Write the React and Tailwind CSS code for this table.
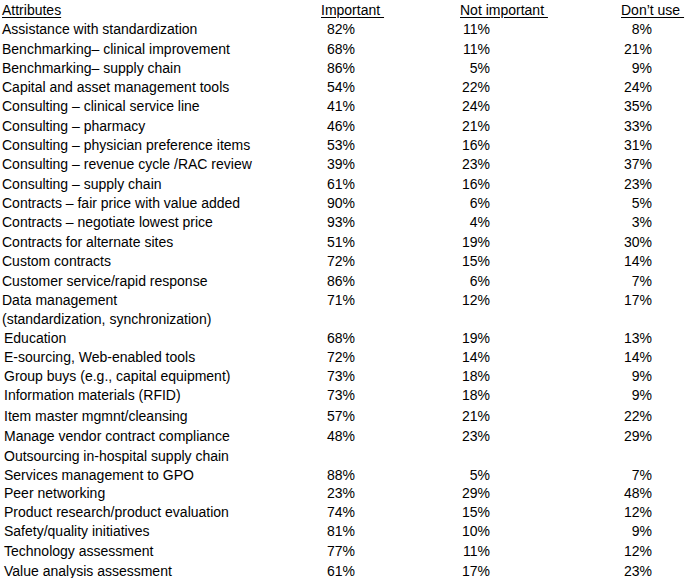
const rows = [
  ["Assistance with standardization", "82%", "11%", "8%", 20],
  ["Benchmarking\u2013 clinical improvement", "68%", "11%", "21%", 19],
  ["Benchmarking\u2013 supply chain", "86%", "5%", "9%", 19],
  ["Capital and asset management tools", "54%", "22%", "24%", 19],
  ["Consulting \u2013 clinical service line", "41%", "24%", "35%", 20],
  ["Consulting \u2013 pharmacy", "46%", "21%", "33%", 19],
  ["Consulting \u2013 physician preference items", "53%", "16%", "31%", 19],
  ["Consulting \u2013 revenue cycle /RAC review", "39%", "23%", "37%", 20],
  ["Consulting \u2013 supply chain", "61%", "16%", "23%", 19],
  ["Contracts \u2013 fair price with value added", "90%", "6%", "5%", 19],
  ["Contracts \u2013 negotiate lowest price", "93%", "4%", "3%", 20],
  ["Contracts for alternate sites", "51%", "19%", "30%", 19],
  ["Custom contracts", "72%", "15%", "14%", 20],
  ["Customer service/rapid response", "86%", "6%", "7%", 19],
  ["Data management", "71%", "12%", "17%", 19],
  ["(standardization, synchronization)", "", "", "", 20],
  ["Education", "68%", "19%", "13%", 18, true],
  ["E-sourcing, Web-enabled tools", "72%", "14%", "14%", 19, true],
  ["Group buys (e.g., capital equipment)", "73%", "18%", "9%", 19, true],
  ["Information materials (RFID)", "73%", "18%", "9%", 20, true],
  ["Item master mgmnt/cleansing", "57%", "21%", "22%", 21, true],
  ["Manage vendor contract compliance", "48%", "23%", "29%", 20, true],
  ["Outsourcing in-hospital supply chain", "", "", "", 20, true],
  ["Services management to GPO", "88%", "5%", "7%", 17, true],
  ["Peer networking", "23%", "29%", "48%", 19, true],
  ["Product research/product evaluation", "74%", "15%", "12%", 19, true],
  ["Safety/quality initiatives", "81%", "10%", "9%", 20, true],
  ["Technology assessment", "77%", "11%", "12%", 20, true],
  ["Value analysis assessment", "61%", "17%", "23%", 20, true],
];

export default function App() {
  return (
    <div className="w-[685px] h-[578px] bg-white text-black text-[14px] leading-none overflow-hidden" style={{ fontFamily: '"Liberation Sans", Arial, sans-serif' }}>
      {/* header */}
      <div className="grid grid-cols-[320px_140px_161px_1fr] h-[19px] items-center">
        <span className="pl-[2px] underline underline-offset-2">Attributes</span>
        <span className="pl-[1px] underline underline-offset-2 whitespace-pre">Important </span>
        <span className="underline underline-offset-2 whitespace-pre">Not important </span>
        <span className="underline underline-offset-2 whitespace-pre">Don’t use </span>
      </div>

      {rows.map(([name, imp, notImp, dont, h, indent], i) => (
        <div key={i} className="grid grid-cols-[320px_140px_161px_1fr] items-center" style={{ height: h }}>
          <span className={indent ? "pl-[4px] whitespace-nowrap" : "pl-[2px] whitespace-nowrap"}>{name}</span>
          <span className="pl-[7px]">{imp}</span>
          <span className="w-[30px] text-right">{notImp}</span>
          <span className="w-[31px] text-right">{dont}</span>
        </div>
      ))}
    </div>
  );
}
